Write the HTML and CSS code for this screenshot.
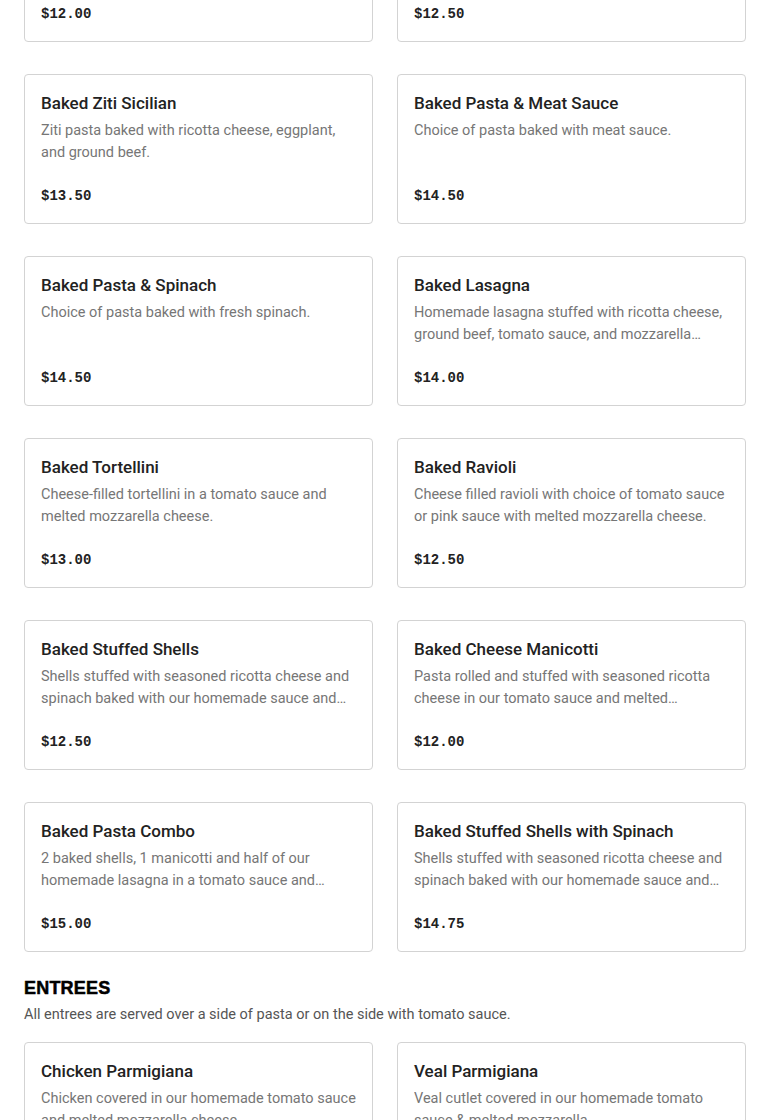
FILE: index.html
```html
<!DOCTYPE html>
<html lang="en">
<head>
<meta charset="utf-8">
<title>Menu</title>
<link rel="stylesheet" href="styles.css">
</head>
<body>
<main class="menu">
  <section class="section section-scrolled">
    <div class="grid">
      <article class="card">
        <h3 class="card-title">Baked Ziti</h3>
        <p class="card-desc">Ziti pasta baked with ricotta cheese and our homemade tomato sauce.</p>
        <div class="card-price">$12.00</div>
      </article>
      <article class="card">
        <h3 class="card-title">Baked Ziti with Meatballs</h3>
        <p class="card-desc">Ziti pasta baked with meatballs and tomato sauce.</p>
        <div class="card-price">$12.50</div>
      </article>
      <article class="card">
        <h3 class="card-title">Baked Ziti Sicilian</h3>
        <p class="card-desc">Ziti pasta baked with ricotta cheese, eggplant, and ground beef.</p>
        <div class="card-price">$13.50</div>
      </article>
      <article class="card">
        <h3 class="card-title">Baked Pasta &amp; Meat Sauce</h3>
        <p class="card-desc">Choice of pasta baked with meat sauce.</p>
        <div class="card-price">$14.50</div>
      </article>
      <article class="card">
        <h3 class="card-title">Baked Pasta &amp; Spinach</h3>
        <p class="card-desc">Choice of pasta baked with fresh spinach.</p>
        <div class="card-price">$14.50</div>
      </article>
      <article class="card">
        <h3 class="card-title">Baked Lasagna</h3>
        <p class="card-desc">Homemade lasagna stuffed with ricotta cheese, ground beef, tomato sauce, and mozzarella cheese.</p>
        <div class="card-price">$14.00</div>
      </article>
      <article class="card">
        <h3 class="card-title">Baked Tortellini</h3>
        <p class="card-desc">Cheese-filled tortellini in a tomato sauce and melted mozzarella cheese.</p>
        <div class="card-price">$13.00</div>
      </article>
      <article class="card">
        <h3 class="card-title">Baked Ravioli</h3>
        <p class="card-desc">Cheese filled ravioli with choice of tomato sauce or pink sauce with melted mozzarella cheese.</p>
        <div class="card-price">$12.50</div>
      </article>
      <article class="card">
        <h3 class="card-title">Baked Stuffed Shells</h3>
        <p class="card-desc">Shells stuffed with seasoned ricotta cheese and spinach baked with our homemade sauce and melted mozzarella cheese.</p>
        <div class="card-price">$12.50</div>
      </article>
      <article class="card">
        <h3 class="card-title">Baked Cheese Manicotti</h3>
        <p class="card-desc">Pasta rolled and stuffed with seasoned ricotta cheese in our tomato sauce and melted mozzarella cheese.</p>
        <div class="card-price">$12.00</div>
      </article>
      <article class="card">
        <h3 class="card-title">Baked Pasta Combo</h3>
        <p class="card-desc">2 baked shells, 1 manicotti and half of our homemade lasagna in a tomato sauce and melted mozzarella cheese.</p>
        <div class="card-price">$15.00</div>
      </article>
      <article class="card">
        <h3 class="card-title">Baked Stuffed Shells with Spinach</h3>
        <p class="card-desc">Shells stuffed with seasoned ricotta cheese and spinach baked with our homemade sauce and melted mozzarella cheese.</p>
        <div class="card-price">$14.75</div>
      </article>
    </div>
  </section>

  <section class="section">
    <h2 class="section-title">ENTREES</h2>
    <p class="section-sub">All entrees are served over a side of pasta or on the side with tomato sauce.</p>
    <div class="grid">
      <article class="card">
        <h3 class="card-title">Chicken Parmigiana</h3>
        <p class="card-desc">Chicken covered in our homemade tomato sauce and melted mozzarella cheese.</p>
        <div class="card-price">$16.00</div>
      </article>
      <article class="card">
        <h3 class="card-title">Veal Parmigiana</h3>
        <p class="card-desc">Veal cutlet covered in our homemade tomato sauce &amp; melted mozzarella.</p>
        <div class="card-price">$18.00</div>
      </article>
    </div>
  </section>
</main>
</body>
</html>
```

FILE: styles.css
```css
* { box-sizing: border-box; }

html, body {
  margin: 0;
  padding: 0;
  background: #ffffff;
}

body {
  font-family: "Roboto", "Liberation Sans", Arial, sans-serif;
  color: #222222;
  overflow: hidden;
}

.menu {
  padding: 0 24px;
}

.section-scrolled {
  margin-top: -108px;
}

.section + .section {
  margin-top: 24px;
}

.section-title {
  margin: 0;
  font-family: "Liberation Sans", Arial, sans-serif;
  font-weight: 700;
  font-size: 18px;
  line-height: 24px;
  color: #000000;
  letter-spacing: 0.2px;
  -webkit-text-stroke: 0.5px #000000;
}

.section-sub {
  margin: 4px 0 16px;
  font-size: 14.5px;
  line-height: 22px;
  color: #555555;
}

.grid {
  display: grid;
  grid-template-columns: 1fr 1fr;
  column-gap: 24px;
  row-gap: 32px;
}

.card {
  display: flex;
  flex-direction: column;
  border: 1px solid #d3d3d3;
  border-radius: 4px;
  padding: 16px;
  background: #ffffff;
}

.card-title {
  margin: 0;
  font-size: 17px;
  line-height: 24px;
  font-weight: 500;
  color: #222222;
}

.card-desc {
  margin: 5px 0 0;
  height: 44px;
  font-size: 14.5px;
  line-height: 22px;
  color: #767676;
  display: -webkit-box;
  -webkit-line-clamp: 2;
  -webkit-box-orient: vertical;
  overflow: hidden;
}

.card-price {
  margin-top: 21px;
  padding-top: 1px;
  font-family: "Liberation Mono", "Courier New", monospace;
  font-weight: 700;
  font-size: 14px;
  line-height: 21px;
  color: #222222;
}
```
